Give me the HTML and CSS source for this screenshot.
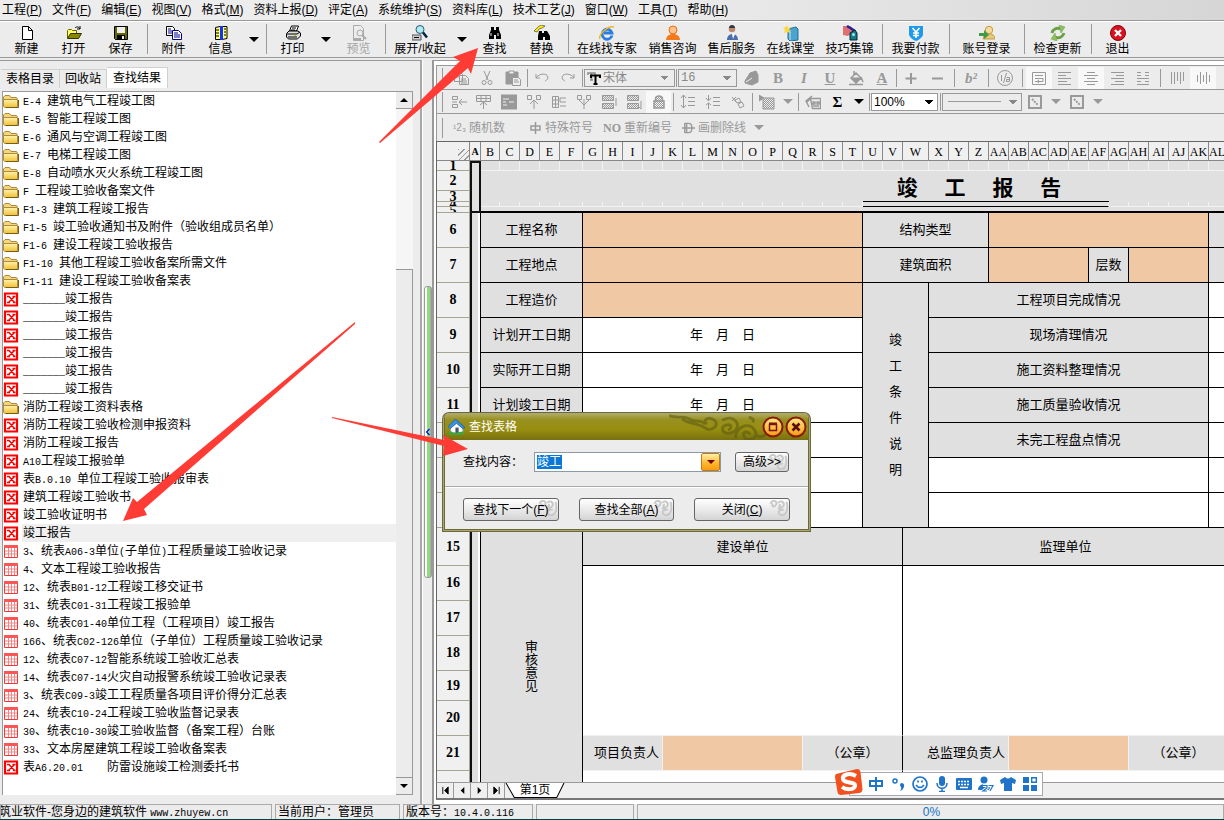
FILE: index.html
```html
<!DOCTYPE html>
<html lang="zh-CN">
<head>
<meta charset="utf-8">
<title>筑业软件</title>
<link rel="stylesheet" href="styles.css">
</head>
<body>
<svg class="defs" aria-hidden="true">
  <defs>
    <linearGradient id="gold" x2="0" y2="1"><stop offset="0" stop-color="#fff3b0"/><stop offset="1" stop-color="#f0c030"/></linearGradient>
    <linearGradient id="orb" x2="0" y2="1"><stop offset="0" stop-color="#ffe98a"/><stop offset="1" stop-color="#f59a10"/></linearGradient>
    <pattern id="dots" width="2" height="2" patternUnits="userSpaceOnUse"><rect width="1" height="1" fill="#999"/><rect x="1" y="1" width="1" height="1" fill="#999"/></pattern>
    <symbol id="folder" viewBox="0 0 16 16"><path d="M.5 13V4l1.500-1.500h4.500l1.500 2h5.500l1 1.500" fill="#f4d67c" stroke="#b08a3a"/><path d="M.5 6.500h14V13l-1 1.500H1.500l-1-1z" fill="url(#gold)" stroke="#b08a3a"/><path d="M15.500 7v7.500H3" fill="none" stroke="#7a5c18"/></symbol>
    <symbol id="redx" viewBox="0 0 16 16"><path d="M2 2.500h12v12H2z" fill="#fff" stroke="#f00" stroke-width="2.200"/><path d="M4 5.500h2l5.500 6M11.500 5.500l-6 6M4 11.500h3M10 11.500h2.500M9.500 5.500h3" fill="none" stroke="#f00" stroke-width="1.500"/></symbol>
    <symbol id="redgrid" viewBox="0 0 16 16"><path d="M1.500 2.500h13v12h-13z" fill="#fff" stroke="#f33"/><path d="M1 2h14v3H1z" fill="#f55"/><path d="M2 8h12M2 11h12M5.500 5v9M8.500 5v9M11.500 5v9" stroke="#e88"/></symbol>
    <symbol id="curl" viewBox="0 0 20 20"><path d="M1 5c2-5 8-3 6 1s-6 1-3-1M9 4c4-4 8 1 5 4s-5-2-2-2M18 3c2 8 0 14-5 14s-4-7 0-5M9 9c2 2 4 3 6 2" fill="none" stroke="#c8c8c8" stroke-width="2"/></symbol>
  </defs>
</svg>

<nav class="menu">
  <a href="#">工程(<u>P</u>)</a><a href="#">文件(<u>F</u>)</a><a href="#">编辑(<u>E</u>)</a><a href="#">视图(<u>V</u>)</a><a href="#">格式(<u>M</u>)</a><a href="#">资料上报(<u>D</u>)</a><a href="#">评定(<u>A</u>)</a><a href="#">系统维护(<u>S</u>)</a><a href="#">资料库(<u>L</u>)</a><a href="#">技术工艺(<u>J</u>)</a><a href="#">窗口(<u>W</u>)</a><a href="#">工具(<u>T</u>)</a><a href="#">帮助(<u>H</u>)</a>
</nav>

<header class="toolbar">
  <button class="tb"><svg viewBox="0 0 16 16"><path d="M3.500 1.500h6l4 4v9h-10z" fill="#fff" stroke="#000"/><path d="M9.500 1.500v4h4" fill="none" stroke="#000"/></svg>新建</button>
  <button class="tb"><svg viewBox="0 0 16 16"><path d="M1.500 13V5.500l1-1h3l1 1h4V8" fill="#ff6" stroke="#660"/><path d="m1.500 13.500 3-5h11l-3 5z" fill="#880" stroke="#330"/><path d="M9 3c2-2 4-1 5 1m0-3v3h-3" fill="none" stroke="#000"/></svg>打开</button>
  <button class="tb"><svg viewBox="0 0 16 16"><path d="M1.500 1.500h13v13h-12l-1-1z" fill="#660" stroke="#000"/><path d="M4 2h8v6H4z" fill="#eee"/><path d="M4 10h8v5H4z" fill="#000"/><path d="M9 11h2v3H9z" fill="#eee"/></svg>保存</button>
  <i class="sep"></i>
  <button class="tb"><svg viewBox="0 0 16 16"><path d="M.5 1.500h6l2 2v7h-8z" fill="#fff" stroke="#000"/><path d="M6.500 5.500h6l3 3v6h-9z" fill="#fff" stroke="#008"/><path d="M2 4h3M2 6h4M2 8h4M8 8h4M8 10h6M8 12h6" stroke="#008"/></svg>附件</button>
  <button class="tb"><svg viewBox="0 0 16 16"><path d="M2.500 2.500 7 1.500h7v12l-5 1H2.500z" fill="#ff6" stroke="#000"/><path d="M7 1h3v14H7z" fill="#13f"/><path d="M3 5h3M3 8h3M3 11h3M11 4h2M11 7h2M11 10h2" stroke="#000"/></svg>信息</button>
  <button class="drop" aria-label="信息菜单"></button>
  <i class="sep"></i>
  <button class="tb"><svg viewBox="0 0 16 16"><path d="m4.500 6 2-5h7l-2 5z" fill="#fff" stroke="#000"/><path d="M1.500 8.500 4 6h9l2.500 2v3l-3 3h-9l-2-2z" fill="#ddd" stroke="#000"/><path d="M2 9h10l3-2M3 12h9M7 3h4M6 5h4" fill="none" stroke="#000"/><path d="M9 10h2v1H9z" fill="#cc0"/></svg>打印</button>
  <button class="drop" aria-label="打印菜单"></button>
  <button class="tb" disabled><svg viewBox="0 0 16 16" fill="none" stroke="#aaa"><path d="M2.500 15.500V.5h7l3 3v12z"/><circle cx="9" cy="8" r="3"/><path d="m11 10 4 4M2 14h8" stroke-width="2"/></svg>预览</button>
  <i class="sep"></i>
  <button class="tb w64"><svg viewBox="0 0 16 16"><path d="M0 10h9v5H0z" fill="#ccc" stroke="#555"/><path d="M2 12.500h5" stroke="#000"/><circle cx="8" cy="4.500" r="4" fill="#aee" stroke="#357"/><path d="m11 7.500 4 5" stroke="#024" stroke-width="2.500"/></svg>展开/收起</button>
  <button class="drop" aria-label="展开菜单"></button>
  <button class="tb"><svg viewBox="0 0 16 16"><path d="M4 2h3v3h2V2h3v3l2 5v4H9v-4H7v4H2v-4l2-5z"/><path d="M4 8v3M11 8v3" stroke="#eee"/></svg>查找</button>
  <button class="tb"><svg viewBox="0 0 16 16"><path d="M5 6h3v2h2V6h3l3 5v4h-5v-3H9v3H4v-4z"/><path d="m0 6 4-4 3-2 4 1-3 2-3 1-2 3z" fill="#fe0" stroke="#333" stroke-width=".6"/></svg>替换</button>
  <i class="sep"></i>
  <button class="tb w72"><svg viewBox="0 0 16 16" fill="none"><path d="M13 10.500A5 5 0 1 1 13 8H5" stroke="#2b7de0" stroke-width="2.800"/><path d="M1 14C-1 10 9 0 15 2" stroke="#f5b41c" stroke-width="1.400"/></svg>在线找专家</button>
  <button class="tb w59"><svg viewBox="0 0 16 16"><path d="M1 15c0-8 14-8 14 0z" fill="#f57a1c"/><circle cx="8" cy="5" r="4" fill="#ffc48a" stroke="#ee6a15"/></svg>销售咨询</button>
  <button class="tb w59"><svg viewBox="0 0 16 16"><path d="M3 15c0-8 11-8 11 0z" fill="#4a6eae"/><circle cx="8" cy="4" r="3.300" fill="#b98a70"/><path d="M5 3c0-4 6-4 6 0" fill="#334"/><path d="m8 9 1 5 2-5z" fill="#fff"/></svg>售后服务</button>
  <button class="tb w59"><svg viewBox="0 0 16 16"><path d="m5 4 8-2 2 2v11l-8 1-2-2z" fill="#4aa4cf" stroke="#246f94"/><path d="M7 5v10" stroke="#bde4f5"/><path d="m4 0 1 3 3-1-2 3 2 3-4-1-3 1 1-3-2-2 3-1z" fill="#fbd740"/></svg>在线课堂</button>
  <button class="tb w59"><svg viewBox="0 0 16 16"><path d="M1 1h7l5 4-7 6-5-1z" fill="#e07070"/><path d="m5 1 8 5" stroke="#229" stroke-width="2.500"/><path d="m8 8 5-3 2 3v7H8z" fill="#177a86" stroke="#023"/><circle cx="11.500" cy="9.500" r="1.500" fill="#9ee"/></svg>技巧集锦</button>
  <i class="sep"></i>
  <button class="tb w61"><svg viewBox="0 0 16 16"><path d="M1 1h14v9q-2 4-7 6-5-2-7-6z" fill="#1d9bea"/><path d="m4.500 3 3.500 4 3.500-4M8 7v6M5 8h6M5 10.500h6" fill="none" stroke="#fff" stroke-width="1.600"/></svg>我要付款</button>
  <i class="sep"></i>
  <button class="tb w69"><svg viewBox="0 0 16 16"><path d="M4 14c0-7 12-7 12 0z" fill="#e8c77a" stroke="#c79a40"/><circle cx="10" cy="5" r="3.700" fill="#f6dc9a" stroke="#c79a40"/><path d="M0 8h5V5l5 5-5 4v-3H0z" fill="#3f9a4a"/></svg>账号登录</button>
  <i class="sep"></i>
  <button class="tb w61"><svg viewBox="0 0 16 16" fill="none" stroke="#6aa043" stroke-width="3"><path d="M2 8c1-4 5-6 9-4M14 8c-1 4-5 6-9 4"/><path d="m9 0 6 2-4 6zM7 16l-6-2 4-6z" fill="#8cc063" stroke-width=".5"/></svg>检查更新</button>
  <i class="sep"></i>
  <button class="tb"><svg viewBox="0 0 16 16"><circle cx="8" cy="8" r="7.500" fill="#d8121e" stroke="#8a0008"/><path d="m5 5 6 6m0-6-6 6" stroke="#fff" stroke-width="2.400"/></svg>退出</button>
</header>

<main class="work">
  <section class="left">
    <div class="tabs" role="tablist">
      <button role="tab">表格目录</button><button role="tab">回收站</button><button role="tab" class="on">查找结果</button>
    </div>
    <div class="listbox">
      <ul class="list">
        <li><svg><use href="#folder"/></svg><span><b>E-4 </b>建筑电气工程竣工图</span></li>
        <li><svg><use href="#folder"/></svg><span><b>E-5 </b>智能工程竣工图</span></li>
        <li><svg><use href="#folder"/></svg><span><b>E-6 </b>通风与空调工程竣工图</span></li>
        <li><svg><use href="#folder"/></svg><span><b>E-7 </b>电梯工程竣工图</span></li>
        <li><svg><use href="#folder"/></svg><span><b>E-8 </b>自动喷水灭火系统工程竣工图</span></li>
        <li><svg><use href="#folder"/></svg><span><b>F </b>工程竣工验收备案文件</span></li>
        <li><svg><use href="#folder"/></svg><span><b>F1-3 </b>建筑工程竣工报告</span></li>
        <li><svg><use href="#folder"/></svg><span><b>F1-5 </b>竣工验收通知书及附件（验收组成员名单）</span></li>
        <li><svg><use href="#folder"/></svg><span><b>F1-6 </b>建设工程竣工验收报告</span></li>
        <li><svg><use href="#folder"/></svg><span><b>F1-10 </b>其他工程竣工验收备案所需文件</span></li>
        <li><svg><use href="#folder"/></svg><span><b>F1-11 </b>建设工程竣工验收备案表</span></li>
        <li><svg><use href="#redx"/></svg><span><b>_______</b>竣工报告</span></li>
        <li><svg><use href="#redx"/></svg><span><b>_______</b>竣工报告</span></li>
        <li><svg><use href="#redx"/></svg><span><b>_______</b>竣工报告</span></li>
        <li><svg><use href="#redx"/></svg><span><b>_______</b>竣工报告</span></li>
        <li><svg><use href="#redx"/></svg><span><b>_______</b>竣工报告</span></li>
        <li><svg><use href="#redx"/></svg><span><b>_______</b>竣工报告</span></li>
        <li><svg><use href="#folder"/></svg><span>消防工程竣工资料表格</span></li>
        <li><svg><use href="#redx"/></svg><span>消防工程竣工验收检测申报资料</span></li>
        <li><svg><use href="#redx"/></svg><span>消防工程竣工报告</span></li>
        <li><svg><use href="#redx"/></svg><span><b>A10</b>工程竣工报验单</span></li>
        <li><svg><use href="#redx"/></svg><span>表<b>B.0.10 </b>单位工程竣工验收报审表</span></li>
        <li><svg><use href="#redx"/></svg><span>建筑工程竣工验收书</span></li>
        <li><svg><use href="#redx"/></svg><span>竣工验收证明书</span></li>
        <li class="sel"><svg><use href="#redx"/></svg><span>竣工报告</span></li>
        <li><svg><use href="#redgrid"/></svg><span><b>3</b>、统表<b>A06-3</b>单位<b>(</b>子单位<b>)</b>工程质量竣工验收记录</span></li>
        <li><svg><use href="#redgrid"/></svg><span><b>4</b>、文本工程竣工验收报告</span></li>
        <li><svg><use href="#redgrid"/></svg><span><b>12</b>、统表<b>B01-12</b>工程竣工移交证书</span></li>
        <li><svg><use href="#redgrid"/></svg><span><b>31</b>、统表<b>C01-31</b>工程竣工报验单</span></li>
        <li><svg><use href="#redgrid"/></svg><span><b>40</b>、统表<b>C01-40</b>单位工程（工程项目）竣工报告</span></li>
        <li><svg><use href="#redgrid"/></svg><span><b>166</b>、统表<b>C02-126</b>单位（子单位）工程质量竣工验收记录</span></li>
        <li><svg><use href="#redgrid"/></svg><span><b>12</b>、统表<b>C07-12</b>智能系统竣工验收汇总表</span></li>
        <li><svg><use href="#redgrid"/></svg><span><b>14</b>、统表<b>C07-14</b>火灾自动报警系统竣工验收记录表</span></li>
        <li><svg><use href="#redgrid"/></svg><span><b>3</b>、统表<b>C09-3</b>竣工工程质量各项目评价得分汇总表</span></li>
        <li><svg><use href="#redgrid"/></svg><span><b>24</b>、统表<b>C10-24</b>工程竣工验收监督记录表</span></li>
        <li><svg><use href="#redgrid"/></svg><span><b>30</b>、统表<b>C10-30</b>竣工验收监督（备案工程）台账</span></li>
        <li><svg><use href="#redgrid"/></svg><span><b>33</b>、文本房屋建筑工程竣工验收备案表</span></li>
        <li><svg><use href="#redx"/></svg><span>表<b>A6.20.01    </b>防雷设施竣工检测委托书</span></li>
      </ul>
      <div class="scroll">
        <button class="up" aria-label="向上"></button>
        <div class="track"></div>
        <div class="thumb"></div>
        <button class="down" aria-label="向下"></button>
      </div>
    </div>
  </section>

  <div class="split"><button aria-label="折叠"><svg viewBox="0 0 8 10"><path d="M6 1 2 5l4 4" fill="none" stroke="#00f" stroke-width="1.500"/></svg></button></div>

  <section class="right">
    <div class="bar r1">
      <button class="ic"><svg viewBox="0 0 16 16"><path d="M1.500 2.500h6l2 2v7h-8zM6.500 5.500h6l3 3v6h-9zM3 5h3M3 7h3M8 9h5M8 11h6M8 13h6"/></svg></button>
      <button class="ic"><svg viewBox="0 0 16 16"><path d="m5 1 4 9M11 1 7 10"/><circle cx="5" cy="12.500" r="2"/><circle cx="11" cy="12.500" r="2"/></svg></button>
      <button class="ic"><svg viewBox="0 0 16 16"><path d="M1 2h12v12H1z" fill="#999"/><path d="M4 1h5v3H4zM7.500 7.500h6l2 2v6h-8z" fill="#eee"/><path d="M9 10h4M9 12h5"/></svg></button>
      <i class="sp n"></i>
      <button class="ic"><svg viewBox="0 0 16 16"><path d="M2 4v4h4M2 8c3-5 11-5 12-1 0 3-3 4-3 4"/></svg></button>
      <button class="ic"><svg viewBox="0 0 16 16"><path d="M14 4v4h-4M14 8C11 3 3 3 2 7c0 3 3 4 3 4"/></svg></button>
      <i class="sp n"></i>
      <label class="fontbox"><svg viewBox="0 0 14 14"><path d="M1 4V2h7v2M4.500 2v7M3 9h3" fill="none" stroke="#888" stroke-width="1.500"/><path d="M4 7V4.500h9V7M8.500 4.500V13M6.500 13h4" fill="none" stroke="#000" stroke-width="2"/></svg><select class="sel font" aria-label="字体"><option>宋体</option></select></label>
      <i class="sp n"></i>
      <select class="sel size" aria-label="字号"><option>16</option></select>
      <button class="ic"><svg viewBox="0 0 16 16"><path d="m1 11 5-8 6-2 2 4v7l-6 3-7-2z" fill="#999"/><path d="m2 12 6-4" stroke="#eee"/></svg></button>
      <button class="ic t"><strong>B</strong></button>
      <button class="ic t"><strong><em>I</em></strong></button>
      <button class="ic t"><strong><u>U</u></strong></button>
      <button class="ic"><svg viewBox="0 0 16 16"><path d="m3 8 5-5 5 5-5 5zM6 1v5M1 14.500h14M13 7l2 5" stroke-width="1.500"/><path d="m3 8h10l-5 5z" fill="#999"/></svg></button>
      <button class="ic t"><strong><u>A</u></strong></button>
      <i class="sp n"></i>
      <button class="ic"><svg viewBox="0 0 16 16"><path d="M8 3v11M2.500 8.500h11" stroke-width="2"/></svg></button>
      <button class="ic"><svg viewBox="0 0 16 16"><path d="M3 8.500h11" stroke-width="2"/></svg></button>
      <i class="sp"></i>
      <button class="ic t"><strong><em>b²</em></strong></button>
      <i class="sp"></i>
      <button class="ic"><svg viewBox="0 0 16 16"><circle cx="8" cy="8" r="7.500"/><path d="M4.500 5v6M9.500 3l-3 10M9.500 7.500h3v4h-3v-2h3"/></svg></button>
      <i class="sp"></i>
      <button class="ic down"><svg viewBox="0 0 16 16"><path d="M1.500 2.500h13v12h-13zM4 5.500h8M4 8.500h8v3H7M4 11.500h2M8 10l-2 1.500L8 13"/></svg></button>
      <button class="ic"><svg viewBox="0 0 16 16"><path d="M1 2.500h13M1 5.500h8M1 8.500h13M1 11.500h9M1 14.500h13"/></svg></button>
      <button class="ic down"><svg viewBox="0 0 16 16"><path d="M4 2.500h8M1 5.500h14M4 8.500h8M1 11.500h14M4 14.500h8"/></svg></button>
      <button class="ic"><svg viewBox="0 0 16 16"><path d="M2 2.500h13M7 5.500h8M2 8.500h13M6 11.500h9M2 14.500h13"/></svg></button>
      <button class="ic"><svg viewBox="0 0 16 16"><path d="M2 2.500h4M10 2.500h4M2 5.500h4M10 5.500h4M2 8.500h12M2 11.500h4M10 11.500h4M2 14.500h12"/></svg></button>
      <i class="sp"></i>
      <button class="ic"><svg viewBox="0 0 16 16"><path d="M2.500 2v12M5.500 2v12M8.500 2v9M11.500 2v12M14.500 2v9"/></svg></button>
      <button class="ic down"><svg viewBox="0 0 16 16"><path d="M2.500 5v7M5.500 2v12M8.500 5v7M11.500 2v12M14.500 5v7"/></svg></button>
    </div>
    <div class="bar r2">
      <button class="ic"><svg viewBox="0 0 16 16"><path d="M1.500 2.500h5v3h-5zM1.500 10.500h5v3h-5zM8 8h8M11 5 8 8l3 3M1 8h5"/></svg></button>
      <button class="ic"><svg viewBox="0 0 16 16"><path d="M.5 1.500h14v6H.5zM5 1v7M10 1v7M1 4.500h14M7.500 15V8M4 11l3.500-3 3.500 3"/></svg></button>
      <button class="ic"><svg viewBox="0 0 16 16"><path d="M0 1h16v14H0z" fill="#999"/><path d="M2 5h6M2 8h3M2 11h4M8 8h5" stroke="#eee"/></svg></button>
      <button class="ic"><svg viewBox="0 0 16 16"><path d="M1.500 1.500h4v4h-4zM10.500 1.500h4v4h-4zM8 15V6M4 10l4-4 4 4"/></svg></button>
      <button class="ic"><svg viewBox="0 0 16 16"><path d="M1.500 2.500h6v11h-6zM1 6h7M1 10h7M4.500 2v11M15 4H9v4h6M9 12h6"/></svg></button>
      <button class="ic"><svg viewBox="0 0 16 16"><path d="M1.500 1.500h4v4h-4zM10.500 1.500h4v4h-4zM3 6l5 5 5-5M8 5v10"/></svg></button>
      <button class="ic"><svg viewBox="0 0 16 16"><path d="M1.500 1.500h11v5h-11zM1.500 9.500h11v5h-11z" fill="url(#dots)"/><path d="M15 4v8"/></svg></button>
      <button class="ic"><svg viewBox="0 0 16 16"><path d="M1.500 1.500h11v5h-11zM1.500 9.500h11v5h-11z" fill="url(#dots)"/><path d="M15 7v8l-2-2"/></svg></button>
      <button class="ic down"><svg viewBox="0 0 16 16"><path d="M4.500 7V5c0-4 7-4 7 0v2M3 7h10v7H3z" stroke-width="1.500" fill="url(#dots)"/></svg></button>
      <i class="sp m"></i>
      <button class="ic"><svg viewBox="0 0 16 16"><path d="M3.500 1v13M1 4l2.500-3L6 4M1 11l2.500 3L6 11M8 3.500h7M8 7.500h7M8 11.500h7"/></svg></button>
      <button class="ic"><svg viewBox="0 0 16 16"><path d="M3.500 1v5M1 4l2.500 3L6 4M3.500 9v6M1 11l2.500-2L6 11M8 3.500h7M8 7.500h7M8 11.500h7"/></svg></button>
      <button class="ic"><svg viewBox="0 0 16 16"><path d="m2 3 4 5M2 7l4-4M5 6l4-2 2 4-4 1zM8 10l4-2 2 4-4 2z"/></svg></button>
      <i class="sp m"></i>
      <button class="ic"><svg viewBox="0 0 16 16"><path d="M4 4h11v11H4z" fill="url(#dots)"/><path d="m0 1 5 3-5 3z" fill="#999"/></svg></button>
      <button class="drop g" aria-label="格式菜单"></button>
      <i class="sp m"></i>
      <button class="ic"><svg viewBox="0 0 16 16"><path d="M5.500 4.500h10v10h-8zM8 8h2v2H8zM12 8h2v2h-2zM8 12h6M7 2 1 7l3 6M2 8l4-4" stroke-width="1.400"/></svg></button>
      <button class="ic t k"><strong>Σ</strong></button>
      <button class="drop" aria-label="求和菜单"></button>
      <i class="sp m"></i>
      <select class="sel zoom" aria-label="缩放"><option>100%</option></select>
      <i class="sp m"></i>
      <select class="sel line" aria-label="线型"><option></option></select>
      <button class="ic"><svg viewBox="0 0 16 16"><path d="M2 2h12v12H2z" stroke-width="2"/><path d="m5 5 6 6" stroke-dasharray="2 1" stroke-width="2"/></svg></button>
      <button class="drop g" aria-label="边框菜单"></button>
      <button class="ic"><svg viewBox="0 0 16 16"><path d="M2 2h12v12H2z" stroke-width="2"/><path d="m5 5 6 6" stroke-dasharray="2 1" stroke-width="2"/></svg></button>
      <button class="drop g" aria-label="斜线菜单"></button>
    </div>
    <div class="bar r3">
      <button class="lb"><span class="num">¹2₃</span>随机数</button>
      <button class="lb"><svg viewBox="0 0 12 12"><path d="M1.500 4h9v4h-9zM6 0v12" fill="none" stroke="#999" stroke-width="1.500"/></svg>特殊符号</button>
      <button class="lb tight"><strong>NO</strong>重新编号</button>
      <button class="lb tight"><svg viewBox="0 0 14 12"><path d="M3 1h4c5 0 5 10 0 10H3zM5 1v10M0 6h14" fill="none" stroke="#999" stroke-width="1.500"/></svg>画删除线</button>
      <button class="drop g" aria-label="更多"></button>
    </div>

    <div class="sheet">
      <table>
        <colgroup><col class="ch"><col class="ca"><col class="cb"><col><col><col><col class="cf"><col><col><col><col><col><col><col><col><col><col><col><col><col><col><col><col><col class="cw"><col><col><col><col><col><col><col><col><col><col><col><col><col><col><col class="cz"></colgroup>
        <thead>
          <tr><th class="corner"></th><th class="na">A</th><th>B</th><th>C</th><th>D</th><th>E</th><th>F</th><th>G</th><th>H</th><th>I</th><th>J</th><th>K</th><th>L</th><th>M</th><th>N</th><th>O</th><th>P</th><th>Q</th><th>R</th><th>S</th><th>T</th><th>U</th><th>V</th><th>W</th><th>X</th><th>Y</th><th>Z</th><th>AA</th><th>AB</th><th>AC</th><th>AD</th><th>AE</th><th>AF</th><th>AG</th><th>AH</th><th>AI</th><th>AJ</th><th>AK</th><th class="last">AL</th></tr>
        </thead>
        <tbody>
          <tr class="h10"><th><div>1</div></th><td class="a pick" rowspan="5"></td><td></td><td></td><td></td><td></td><td></td><td></td><td></td><td></td><td></td><td></td><td></td><td></td><td></td><td></td><td></td><td></td><td></td><td></td><td></td><td></td><td></td><td></td><td></td><td></td><td></td><td></td><td></td><td></td><td></td><td></td><td></td><td></td><td></td><td></td><td></td><td></td><td></td></tr>
          <tr class="h20"><th>2</th><td class="nb" colspan="19" rowspan="2"></td><td class="title" colspan="12" rowspan="2">竣　&nbsp;工　&nbsp;报　&nbsp;告</td><td class="nb" colspan="6" rowspan="2"></td></tr>
          <tr class="h11"><th><div>3</div></th></tr>
          <tr class="h5"><th><div>4</div></th><td></td><td></td><td></td><td></td><td></td><td></td><td></td><td></td><td></td><td></td><td></td><td></td><td></td><td></td><td></td><td></td><td></td><td></td><td></td><td class="rule" colspan="12"></td><td></td><td></td><td></td><td></td><td></td><td></td></tr>
          <tr class="h6"><th><div>5</div></th><td class="thick" colspan="37"></td></tr>
          <tr class="h35"><th>6</th><td class="a" rowspan="17"></td><td class="c" colspan="5">工程名称</td><td class="c o" colspan="14"></td><td class="c" colspan="6">结构类型</td><td class="c o" colspan="11"></td><td class="c"></td></tr>
          <tr class="h35"><th>7</th><td class="c" colspan="5">工程地点</td><td class="c o" colspan="14"></td><td class="c" colspan="6">建筑面积</td><td class="c o" colspan="5"></td><td class="c" colspan="2">层数</td><td class="c o" colspan="4"></td><td class="c"></td></tr>
          <tr class="h35"><th>8</th><td class="c" colspan="5">工程造价</td><td class="c o" colspan="14"></td><td class="c wide" colspan="3" rowspan="7">竣<br>工<br>条<br>件<br>说<br>明</td><td class="c" colspan="14">工程项目完成情况</td><td class="c w"></td></tr>
          <tr class="h35"><th>9</th><td class="c" colspan="5">计划开工日期</td><td class="c w" colspan="14">年　月　日</td><td class="c" colspan="14">现场清理情况</td><td class="c w"></td></tr>
          <tr class="h35"><th>10</th><td class="c" colspan="5">实际开工日期</td><td class="c w" colspan="14">年　月　日</td><td class="c" colspan="14">施工资料整理情况</td><td class="c w"></td></tr>
          <tr class="h35"><th>11</th><td class="c" colspan="5">计划竣工日期</td><td class="c w" colspan="14">年　月　日</td><td class="c" colspan="14">施工质量验收情况</td><td class="c w"></td></tr>
          <tr class="h35"><th>12</th><td class="c" colspan="5"></td><td class="c w" colspan="14"></td><td class="c" colspan="14">未完工程盘点情况</td><td class="c w"></td></tr>
          <tr class="h35"><th>13</th><td class="c" colspan="5"></td><td class="c w" colspan="14"></td><td class="c w" colspan="14"></td><td class="c w"></td></tr>
          <tr class="h35"><th>14</th><td class="c" colspan="5"></td><td class="c w" colspan="14"></td><td class="c w" colspan="14"></td><td class="c w"></td></tr>
          <tr class="h38"><th>15</th><td class="c review" colspan="5" rowspan="8">审<br>核<br>意<br>见</td><td class="c" colspan="16">建设单位</td><td class="c" colspan="16">监理单位</td></tr>
          <tr class="h35"><th>16</th><td class="c w lite" colspan="16" rowspan="5"></td><td class="c w lite" colspan="16" rowspan="5"></td></tr>
          <tr class="h35"><th>17</th></tr>
          <tr class="h35"><th>18</th></tr>
          <tr class="h30"><th>19</th></tr>
          <tr class="h35"><th>20</th></tr>
          <tr class="h35"><th>21</th><td class="s r" colspan="4">项目负责人</td><td class="s o" colspan="7"></td><td class="s k" colspan="5">（公章）</td><td class="s r" colspan="5">总监理负责人</td><td class="s o" colspan="6"></td><td class="s" colspan="5">（公章）</td></tr>
          <tr class="h12"><th></th><td class="w k" colspan="16"></td><td class="w" colspan="16"></td></tr>
        </tbody>
      </table>
    </div>
    <div class="pager">
      <button aria-label="首页"><svg viewBox="0 0 10 10"><path d="M2 1v8M8 1v8L4 5z" stroke="#000"/></svg></button>
      <button aria-label="上一页"><svg viewBox="0 0 10 10"><path d="M7 1v8L3 5z"/></svg></button>
      <button aria-label="下一页"><svg viewBox="0 0 10 10"><path d="M3 1v8l4-4z"/></svg></button>
      <button aria-label="末页"><svg viewBox="0 0 10 10"><path d="M8 1v8M2 1v8l4-4z" stroke="#000"/></svg></button>
      <div class="page"><svg viewBox="0 0 58 17" preserveAspectRatio="none"><path d="M1 0 9 16.500h41L57 0" fill="#fff" stroke="#000"/></svg><span>第1页</span></div>
    </div>
  </section>
</main>

<footer class="status">
  <div class="s1">筑业软件-您身边的建筑软件 <b>www.zhuyew.cn</b></div>
  <div class="s2">当前用户：管理员</div>
  <div class="s3">版本号：<b>10.4.0.116</b></div>
  <div class="s4"></div>
  <div class="s5">0%</div>
</footer>

<form class="dialog">
  <div class="cap">
    <svg class="home" viewBox="0 0 16 16"><path d="M2 9 8 4l6 5v5H3z" fill="#fff" stroke="#9ab"/><path d="M0 8 7 1l9 8-2 1-6-5-6 5z" fill="#3b92e0" stroke="#125a9c" stroke-width=".7"/><path d="M7 9h3v5H7z" fill="#456"/><path d="M0 14c3-3 4 0 7 0s5-2 9-1l-3 3H3z" fill="#3ea63a"/></svg>
    <span>查找表格</span>
    <svg class="cloud" viewBox="0 0 140 26"><path d="M0 1c10 4 16-1 22 4 6 4 12-1 16 5M14 4c4 6 16 4 24 10 6 5 16-3 10-8s-14 0-8 4M56 6c12-8 22 6 12 12s-16-5-8-7 5 5 2 5M70 25c0-12 14-18 20-9s-8 14-11 7 6-5 6-2M84 3c4 0 6 3 4 5M92 22c6 4 16-4 10-8M124 14c8-2 12 6 6 10" fill="none" stroke="#5f5c12" stroke-width="3" opacity=".6"/></svg>
    <button type="button" class="orb" aria-label="最大化"><svg viewBox="0 0 22 22"><circle cx="11" cy="11" r="9.500" fill="url(#orb)" stroke="#8a1a08" stroke-width="2"/><path d="M7.500 8.500h7v6h-7z" fill="none" stroke="#7a1206" stroke-width="1.500"/><path d="M7 7.500h8" stroke="#7a1206" stroke-width="2"/></svg></button>
    <button type="button" class="orb" aria-label="关闭窗口"><svg viewBox="0 0 22 22"><circle cx="11" cy="11" r="9.500" fill="url(#orb)" stroke="#8a1a08" stroke-width="2"/><path d="m7.500 7.500 7 7m0-7-7 7" stroke="#5a0e04" stroke-width="2.600"/></svg></button>
  </div>
  <div class="find">
    <label for="q">查找内容：</label>
    <div class="combo"><input id="q" type="text" value="竣工"><button type="button" aria-label="历史"></button></div>
    <button type="button" class="btn adv"><svg><use href="#curl"/></svg><span>高级&gt;&gt;</span></button>
  </div>
  <div class="acts">
    <button type="button" class="btn"><svg><use href="#curl"/></svg><span>查找下一个(<u>F</u>)</span></button>
    <button type="button" class="btn"><svg><use href="#curl"/></svg><span>查找全部(<u>A</u>)</span></button>
    <button type="button" class="btn"><svg><use href="#curl"/></svg><span>关闭(<u>C</u>)</span></button>
  </div>
</form>

<div class="ime">
  <svg class="logo" viewBox="0 0 28 28"><path d="m1 6 21-5q3 0 3.500 3l2 17q0 3-3 4L6 27q-3 0-3.500-3L0 9q0-2 1-3z" fill="#f2501e"/><path d="M21 8C14 4 7 7 8 11c1 5 13 2 12 7-1 4-9 4-13 1" fill="none" stroke="#fff" stroke-width="4"/></svg>
  <svg viewBox="0 0 16 16"><path d="M2 5h12v5H2zM8 1v14" fill="none" stroke="#1f74c8" stroke-width="2"/></svg>
  <svg viewBox="0 0 16 16"><circle cx="5" cy="5" r="2" fill="none" stroke="#1f74c8" stroke-width="1.500"/><path d="M11 7q4 0 3 4-1 3-4 4 2-2 1-4-2-2 0-4z" fill="#1f74c8"/></svg>
  <svg viewBox="0 0 16 16"><g fill="none" stroke="#1f74c8" stroke-width="1.700"><circle cx="8" cy="8" r="7"/><path d="M4 9q4 5 8 0M6 4.500v2M10 4.500v2"/></g></svg>
  <svg viewBox="0 0 16 16"><rect x="5" width="6" height="10" rx="3" fill="#1f74c8"/><path d="M3 7c0 7 10 7 10 0M8 12v4M5 15.500h6" fill="none" stroke="#1f74c8" stroke-width="1.500"/></svg>
  <svg viewBox="0 0 16 16"><rect y="2" width="16" height="12" rx="1" fill="#1f74c8"/><path d="M2 5.500h12M2 8.500h12" stroke="#fff" stroke-width="1.500" stroke-dasharray="2 1"/><path d="M4 11.500h8" stroke="#fff" stroke-width="1.500"/></svg>
  <svg viewBox="0 0 16 16"><circle cx="6" cy="4" r="3.500" fill="#1f74c8"/><path d="M0 14c0-7 11-8 12-2v2z" fill="#1f74c8"/><path d="M5 9.500h4v2.500L5 15h4M10.500 9.500h4.500L12 15" fill="none" stroke="#fff" stroke-width="3"/><path d="M5 9.500h4v2.500L5 15h4M10.500 9.500h4.500L12 15" fill="none" stroke="#1f74c8" stroke-width="1.200"/></svg>
  <svg viewBox="0 0 16 16"><path d="m5 1-5 3 1 4 3-1v8h8V7l3 1 1-4-5-3q-3 3-6 0z" fill="#1f74c8"/></svg>
  <svg viewBox="0 0 16 16"><path d="M1 1h6v6H1zM1 9h6v6H1zM9 9h6v6H9z" fill="#1f74c8"/><path d="M9.700 1.700h4.600v4.600H9.700z" fill="none" stroke="#1f74c8" stroke-width="1.400"/></svg>
</div>

<svg class="arrows" viewBox="0 0 1224 820" aria-hidden="true">
  <path d="m478 48-25 9 7 4-81 81 1 1 88-75 3 6zM123 521l10-23 4 4 218-180v2L144 509l3 6zM332 417l112 23-1-5 25 14-25 7 1-10-112-28z" fill="#ff3b35"/>
</svg>
</body>
</html>
```
FILE: styles.css
```css
* { box-sizing: border-box; }
body {
  margin: 0;
  height: 100vh;
  display: flex;
  flex-direction: column;
  overflow: hidden;
  position: relative;
  background: #ececec;
  color: #000;
  font: 12px/16px "Liberation Sans", "Noto Sans CJK SC", sans-serif;
}
button, input, select { font: inherit; color: inherit; margin: 0; padding: 0; border: 0; background: none; }
a { color: inherit; text-decoration: none; }
b { font: 10px/16px "Liberation Mono", monospace; }
.defs { position: absolute; width: 0; height: 0; }

.menu {
  height: 20px;
  display: flex;
  gap: 10px;
  padding: 2px 2px 0;
  white-space: nowrap;
  background: linear-gradient(90deg, #ededed 50%, #d6d6d6);
}

.toolbar {
  height: 38px;
  display: flex;
  padding-left: 3px;
  border-top: 1px solid #999;
  border-bottom: 1px solid #999;
  box-shadow: inset 0 1px #fff;
}
.tb {
  width: 47px;
  display: flex;
  flex-direction: column;
  align-items: center;
  padding-top: 4px;
  line-height: 16px;
  white-space: nowrap;
}
.tb svg { width: 16px; height: 16px; }
.tb:disabled { color: #a4a4a4; }
.w59 { width: 59px; }
.w61 { width: 61px; }
.w64 { width: 64px; }
.w69 { width: 69px; }
.w72 { width: 72px; }
.sep { width: 6px; display: flex; justify-content: center; padding: 3px 0; }
.sep::before { content: ""; width: 1px; background: #999; }
.drop { width: 19px; display: flex; align-items: center; justify-content: center; }
.drop::before { content: ""; border: 5px solid transparent; border-top-color: #000; border-bottom: 0; }
.drop.g::before { border-top-color: #999; }

.work { flex: 1; min-height: 0; display: flex; margin-top: 2px; }

.left {
  flex: 0 0 422px;
  display: flex;
  flex-direction: column;
  border-top: 1px solid #999;
  border-right: 2px solid #a8a8a8;
  padding: 6px 7px 5px 0;
  min-height: 0;
}
.tabs { display: flex; align-items: flex-end; height: 21px; padding-left: 1px; }
.tabs button { height: 19px; padding: 0 5px; border: 1px solid #d0d0d0; border-width: 1px 1px 0 0; white-space: nowrap; }
.tabs .on { height: 21px; padding: 0 6px; background: #fff; }
.listbox {
  flex: 1;
  min-height: 0;
  display: flex;
  margin: 3px 0 4px 2px;
  border: 1px solid #999;
  border-width: 1px 0 0 1px;
  background: #fff;
}
.list { flex: 1; min-width: 0; margin: 0; padding: 0; list-style: none; overflow: hidden; }
.list li { height: 18px; display: flex; align-items: center; gap: 3px; white-space: pre; }
.list svg { flex: 0 0 16px; height: 16px; }
.list span { flex: 1; height: 18px; line-height: 18px; padding-left: 1px; }
.sel span { background: #efefef; }
.scroll { width: 17px; display: flex; flex-direction: column; }
.scroll button { height: 17px; border: 1px solid #999; border-width: 0 1px 1px 0; background: #ececec; display: flex; align-items: center; justify-content: center; }
.scroll button::before { content: ""; border: 4px solid transparent; }
.scroll .up::before { border-bottom-color: #000; border-top: 0; }
.scroll .down::before { border-top-color: #000; border-bottom: 0; }
.track { flex: 160; background: #f6f6f6; }
.thumb { flex: 508; background: #ececec; border: 1px solid #999; border-width: 1px 1px 1px 0; }

.split { flex: 0 0 12px; display: flex; align-items: center; justify-content: center; border-right: 2px solid #999; border-left: 1px solid #fff; }
.split button {
  width: 8px;
  height: 292px;
  border: 1px solid #999;
  border-radius: 3px;
  background: linear-gradient(90deg, #fff 40%, #8fdc7a 40% 80%, #aaa 80%);
}
.split svg { display: block; width: 6px; height: 10px; }

.right {
  flex: 1;
  min-width: 0;
  display: flex;
  flex-direction: column;
  padding: 4px 0 4px 2px;
  border-top: 1px solid #999;
  background: #fff;
}
.bar { height: 24px; display: flex; align-items: center; border: 1px solid #999; border-width: 1px 0 0 1px; background: #ececec; overflow: hidden; }
.bar::before { content: ""; flex: 0 0 5px; height: 20px; border-right: 1px solid #999; }
.r1::before { margin-right: 5px; }
.r2::before { margin-right: 3px; }
.r3 { height: 28px; }
.r3::before { margin-right: 10px; }
.ic { flex: 0 0 26px; height: 22px; display: flex; align-items: center; justify-content: center; }
.r2 .ic { flex-basis: 25px; }
.ic svg { width: 16px; height: 16px; fill: none; stroke: #999; }
.ic.t { color: #999; font: 15px/20px "Liberation Serif", serif; }
.ic.k { color: #000; }
.ic.down { background: #f8f8f8; }
.bar .drop { flex: 0 0 17px; }
.sp { flex: 0 0 8px; height: 18px; display: flex; justify-content: center; }
.sp.n { flex-basis: 3px; }
.sp.m { flex-basis: 4px; }
.sp::before { content: ""; width: 1px; background: #999; }
select.sel {
  appearance: none;
  height: 18px;
  border: 1px solid #999;
  color: #888;
  padding-left: 2px;
  background: linear-gradient(45deg, transparent 50%, #888 50%) no-repeat right 9px center / 4px 4px, linear-gradient(-45deg, transparent 50%, #888 50%) no-repeat right 5px center / 4px 4px;
}
.fontbox { position: relative; flex: 0 0 91px; display: flex; }
.fontbox svg { position: absolute; left: 3px; top: 2px; width: 14px; height: 14px; }
select.font { flex: 1; padding-left: 18px; }
select.size { flex: 0 0 59px; margin-right: 2px; font-family: "Liberation Mono", monospace; }
select.zoom {
  flex: 0 0 67px;
  color: #000;
  background: linear-gradient(45deg, transparent 50%, #000 50%) no-repeat right 8px center / 4px 4px, linear-gradient(-45deg, transparent 50%, #000 50%) no-repeat right 4px center / 4px 4px, #fff;
}
select.line {
  flex: 0 0 80px;
  background: linear-gradient(#999, #999) no-repeat 5px center / 53px 1px, linear-gradient(45deg, transparent 50%, #888 50%) no-repeat right 8px center / 4px 4px, linear-gradient(-45deg, transparent 50%, #888 50%) no-repeat right 4px center / 4px 4px;
}
.lb { display: flex; align-items: center; gap: 3px; color: #999; white-space: nowrap; margin-right: 24px; }
.num { font-size: 10px; }
.lb svg { width: 13px; height: 12px; }
.lb strong { font: bold 12px/16px "Liberation Serif", serif; }
.lb + .tight { margin: 0 10px 0 -14px; }
.tight + .tight { margin: 0 4px 0 0; }

.sheet { flex: 1; min-height: 0; overflow: hidden; border: 1px solid #666; border-width: 1px 0 0 1px; background: #fff; }
table { width: calc(100% + 5px); table-layout: fixed; border-collapse: separate; border-spacing: 0; }
col { width: 20px; }
.ch { width: 33px; }
.ca { width: 11px; }
.cb { width: 19px; }
.cf { width: 23px; }
.cw { width: 26px; }
.cz { width: auto; }
th, td { padding: 0; overflow: hidden; }
th { background: #f0f0f0; border: 1px solid #a8a495; border-width: 0 1px 1px 0; font: bold 14px/14px "Liberation Serif", serif; }
thead th { height: 19px; padding-top: 2px; border-color: #888; font: 12px/14px "Liberation Serif", serif; }
thead .na { font-size: 10px; font-weight: bold; }
thead .last { padding-right: 5px; }
.corner { background: repeating-linear-gradient(135deg, #999 0 1px, transparent 1px 4px) no-repeat right bottom / 11px 11px, #f0f0f0; }
td { background: #e0e0e0; border: 1px solid #f2f2f2; border-width: 0 1px 1px 0; text-align: center; font-size: 13px; line-height: 16px; }
th div { overflow: hidden; }
.h5 td, .h6 td { line-height: 0; }
.h10, .h10 > * { height: 10px; }
.h10 div { height: 9px; line-height: 9px; }
.h20, .h20 > th { height: 20px; }
.h11, .h11 > th { height: 11px; }
.h11 div { height: 10px; line-height: 12px; }
.h5 > *, .h5 { height: 5px; }
.h5 div { height: 4px; line-height: 4px; }
.h6 > *, .h6 { height: 6px; }
.h6 div { height: 5px; line-height: 8px; }
.h12 > th { height: 12px; }
.h30 > th { height: 30px; }
.h35 > th { height: 35px; }
.h38 > th { height: 38px; }
.nb { border: 0; }
.title { border: 0; border-bottom: 1px solid #000; font-size: 21px; font-weight: 700; line-height: 26px; padding: 3px 14px 0 0; white-space: nowrap; }
.rule { border-bottom-color: #000; }
.thick { border-bottom: 2px solid #000; border-right: 0; }
.a { border: 0; border-left: 2px solid #111; border-right: 1px solid #000; box-shadow: inset -2px 0 #fff; }
.a.pick { border: 2px solid #111; box-shadow: none; }
.c { border-color: #000; }
.o { background: #f0c8a4; }
.w { background: #fff; }
.k { border-right-color: #000; }
.wide { line-height: 26px; }
.review { line-height: 13px; padding-top: 22px; }
.lite { border-bottom-color: #f2f2f2; }
.s.r { text-align: right; padding-right: 3px; }
td.w.k, .h12 td { border-bottom: 0; }

.pager { height: 18px; display: flex; border: 1px solid #999; border-left-color: #666; border-bottom: 2px solid #777; border-right: 0; background: #efefef; }
.pager button { width: 17px; border: 1px solid #999; border-width: 0 1px 0 0; display: flex; align-items: center; justify-content: center; }
.pager button svg { width: 9px; height: 9px; }
.page { display: grid; width: 60px; }
.page > * { grid-area: 1 / 1; }
.page svg { width: 60px; height: 15px; }
.page span { text-align: center; line-height: 15px; z-index: 1; }

.status { height: 16px; display: flex; gap: 3px; border-bottom: 1px solid #044; white-space: nowrap; line-height: 14px; }
.status div { border: 1px solid #aaa; border-width: 1px 1px 0 1px; overflow: hidden; padding-left: 2px; }
.status b { line-height: 13px; }
.s1 { width: 272px; text-indent: -4px; }
.s2 { width: 125px; }
.s3 { width: 130px; }
.s4 { width: 98px; }
.s5 { flex: 1; color: #1673c5; text-align: center; }

.dialog {
  position: absolute;
  left: 442px;
  top: 412px;
  width: 369px;
  border: 3px solid #6d6a38;
  border-top-width: 1px;
  border-radius: 7px 7px 0 0;
  outline: 1px solid #a9a77a;
  outline-offset: -2px;
  background: #ececec;
}
.cap {
  height: 27px;
  display: flex;
  align-items: center;
  padding: 0 0 0 3px;
  border-radius: 5px 5px 0 0;
  color: #fff;
  background: linear-gradient(#b3ae6c, #989020 25%, #988e10 60%, #787010);
}
.home { width: 17px; height: 17px; margin-right: 4px; }
.cloud { flex: 1; height: 26px; min-width: 0; margin: 0 -40px 0 152px; }
.orb { width: 22px; height: 22px; margin-right: 1px; position: relative; }
.orb svg { display: block; }
.find { height: 47px; display: flex; align-items: flex-start; padding: 12px 18px 0; border-bottom: 1px solid #aaa; }
.find label { width: 71px; line-height: 20px; white-space: nowrap; }
.combo { width: 187px; height: 20px; display: flex; border: 1px solid #8a9aa8; background: #fff; }
.combo input { flex: 1; min-width: 0; color: #fff; padding-left: 2px; background: linear-gradient(#0a78d6, #0a78d6) no-repeat 2px 2px / 25px 14px; }
.combo button { width: 19px; border: 1px solid #c47a10; border-radius: 2px; background: linear-gradient(#fff0a8, #ffb52c 60%, #f89c10); display: flex; align-items: center; justify-content: center; }
.combo button::before { content: ""; border: 4px solid transparent; border-top-color: #700; border-bottom: 0; }
.btn {
  position: relative;
  width: 96px;
  height: 23px;
  border: 1px solid #666;
  border-radius: 3px;
  background: linear-gradient(#fff, #e6e6e6 60%, #d4d4d4);
  white-space: nowrap;
}
.btn svg { position: absolute; right: 0; top: 0; width: 20px; height: 19px; }
.btn span { position: relative; }
.adv { width: 54px; height: 20px; margin-left: 14px; line-height: 16px; }
.acts { height: 42px; display: flex; gap: 20px; padding: 11px 18px 0; box-shadow: inset 0 1px #fff; }

.ime { position: absolute; left: 849px; top: 772px; height: 24px; display: flex; align-items: center; gap: 6px; padding: 0 4px 0 18px; border: 1px solid #a5aab0; background: #fff; }
.ime svg { width: 16px; height: 16px; }
.ime .logo { position: absolute; left: -15px; top: -5px; width: 28px; height: 28px; }

.arrows { position: absolute; left: 0; top: 0; width: 1224px; height: 820px; pointer-events: none; }
```
